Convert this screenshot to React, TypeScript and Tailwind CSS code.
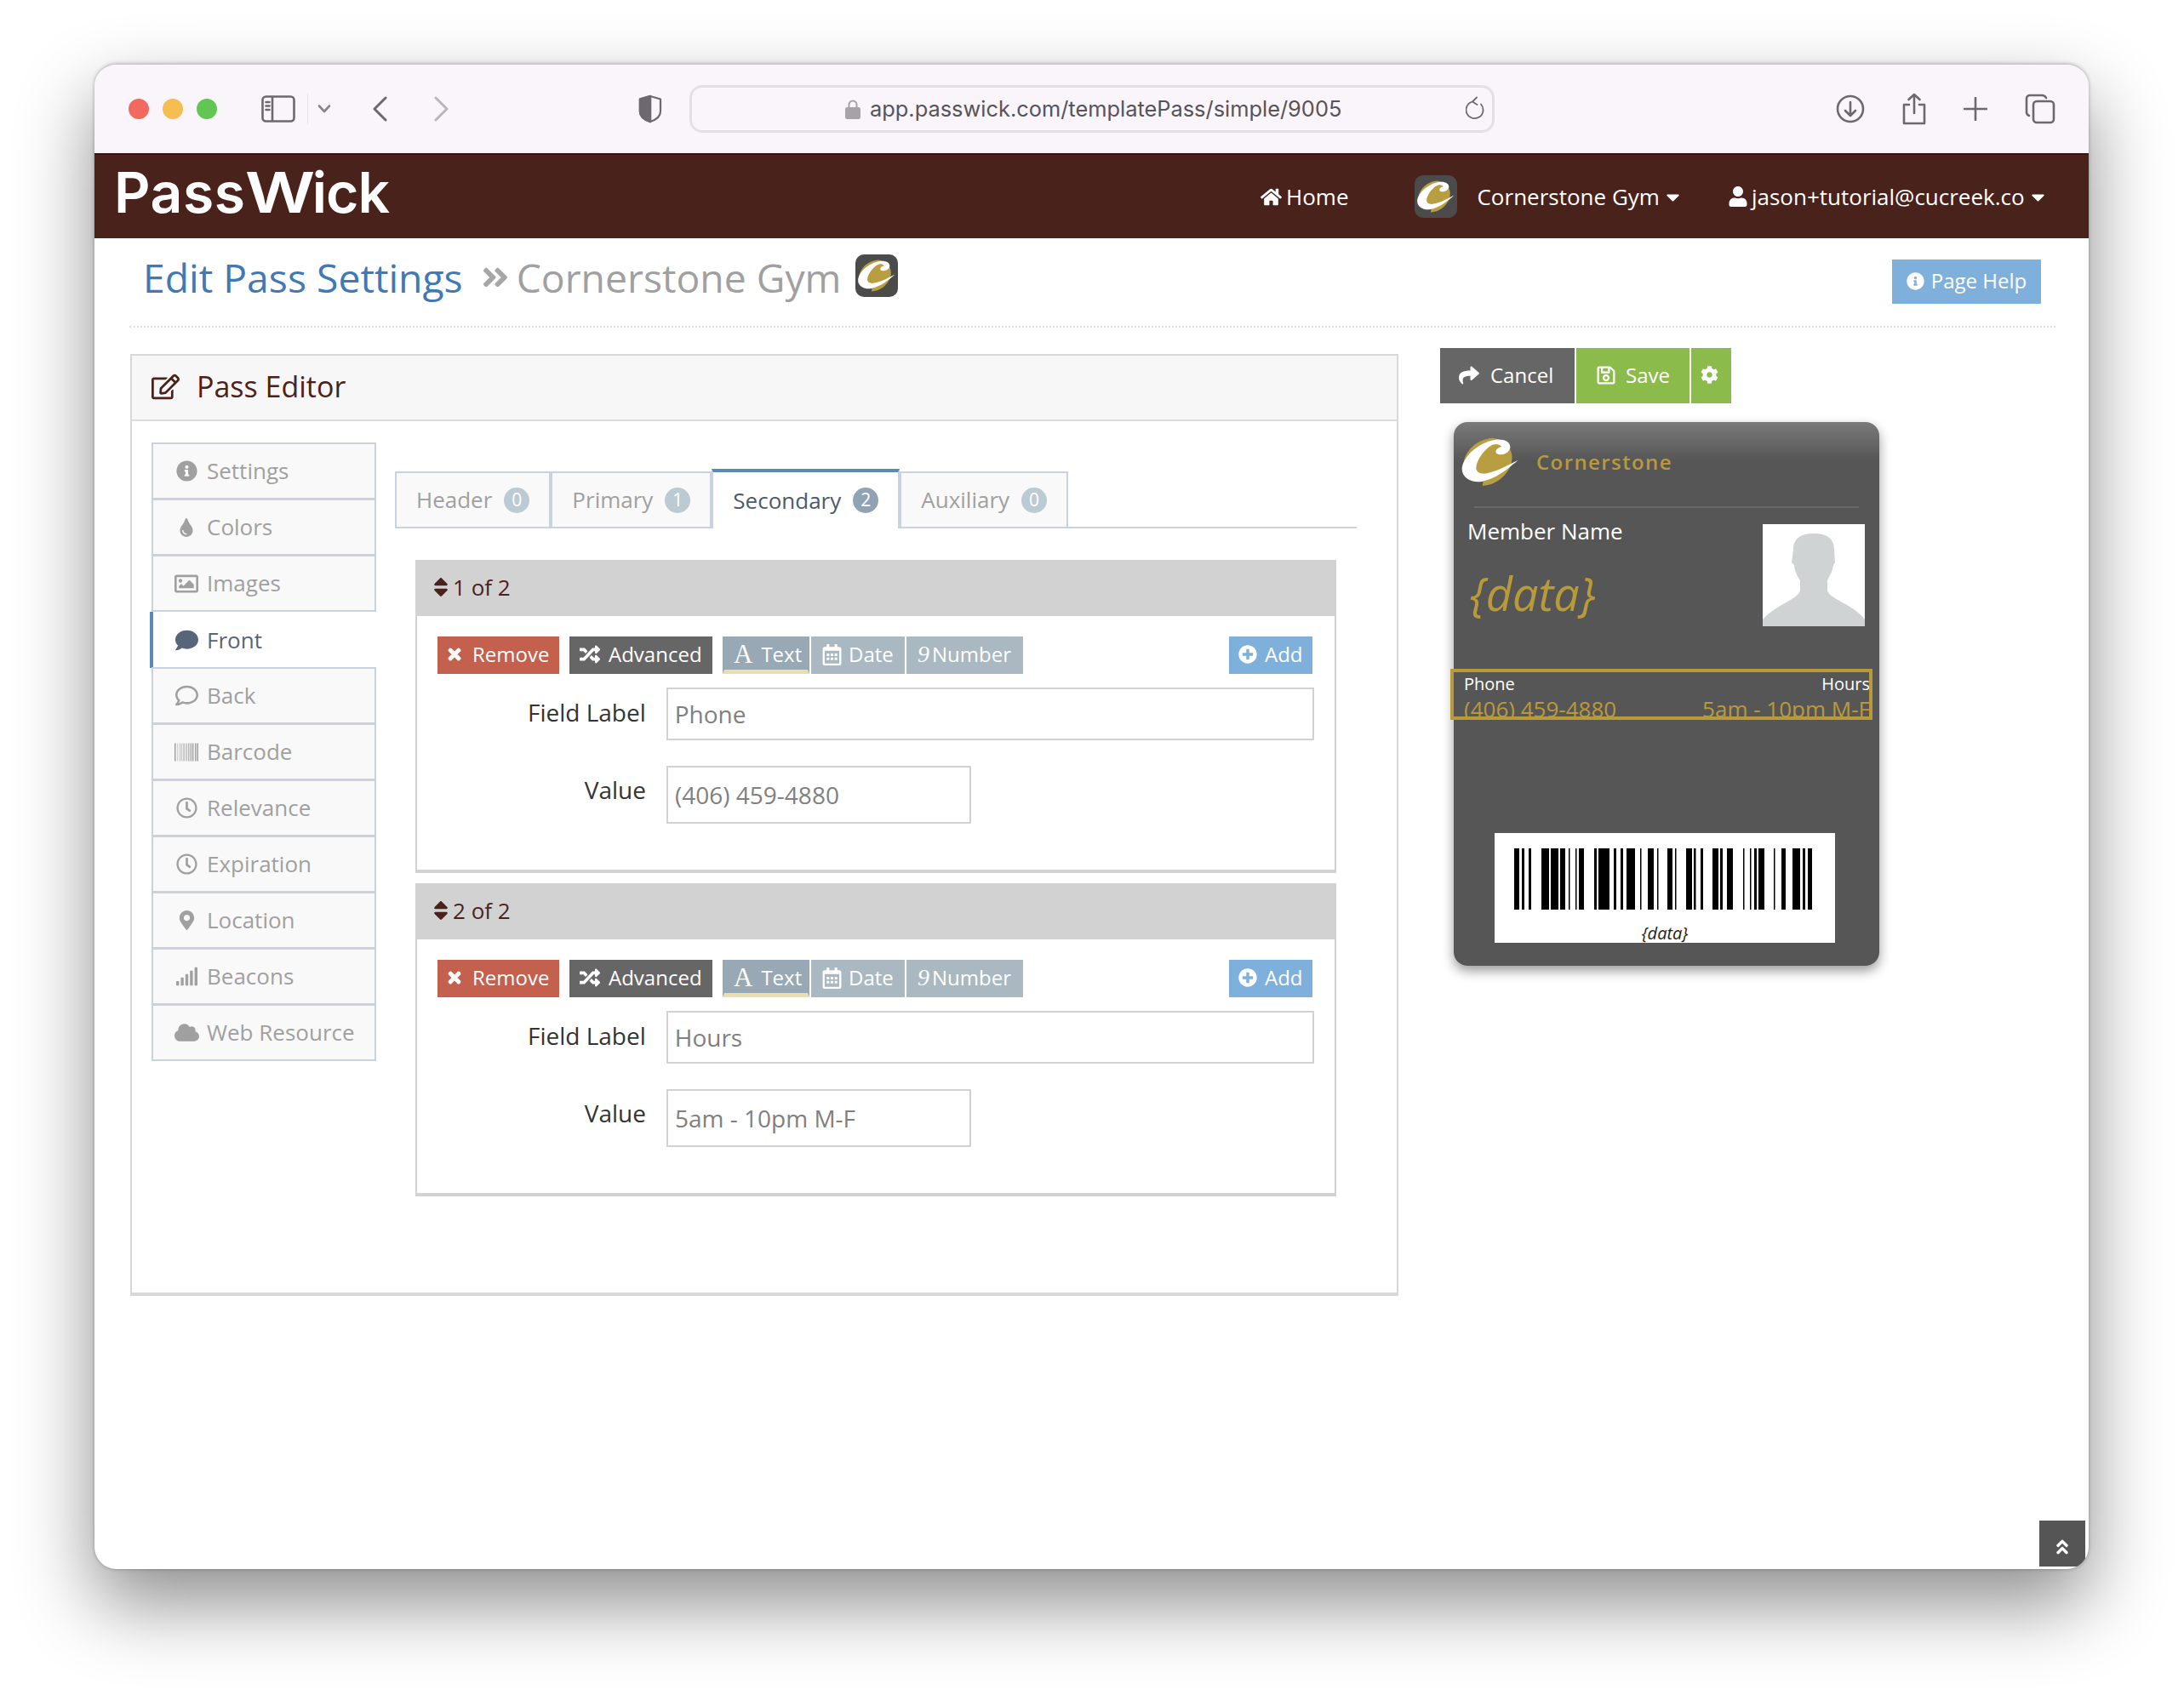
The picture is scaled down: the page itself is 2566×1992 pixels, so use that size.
import {
  FaHome, FaCaretDown, FaUser, FaRegEdit, FaInfoCircle, FaTint, FaRegImage, FaComment, FaRegComment,
  FaBarcode, FaRegClock, FaMapMarkerAlt, FaSignal, FaCloud, FaSort, FaTimes, FaRandom,
  FaRegCalendarAlt, FaPlusCircle, FaShare, FaRegSave, FaCog, FaAngleDoubleUp, FaAngleDoubleRight,
} from "react-icons/fa";

const sans = "font-['Open_Sans',sans-serif]";

// x, width of each bar, measured from the barcode's left edge
const bars: [number, number][] = [
  [19, 6], [28, 3], [36, 3], [51, 9], [62, 9], [73, 6], [83, 1.5], [91, 1.5], [95, 6], [113, 3], [118, 13],
  [136, 3], [144, 3], [151, 10], [167, 1.5], [176, 7], [187, 1.5], [199, 6], [208, 1.5], [221, 7], [230, 2.5],
  [238, 3], [252, 7], [261, 3], [269, 7], [288, 1.5], [296, 1.5], [301, 3], [306, 7], [324, 1.5], [333, 5],
  [346, 9], [358, 3], [364, 5],
];

const menu = [
  { label: "Settings", icon: <FaInfoCircle /> },
  { label: "Colors", icon: <FaTint className="text-[22px]" /> },
  { label: "Images", icon: <FaRegImage className="text-[28px]" /> },
  { label: "Front", icon: <FaComment className="text-[27px]" />, active: true },
  { label: "Back", icon: <FaRegComment className="text-[27px]" /> },
  { label: "Barcode", icon: <FaBarcode className="text-[28px]" /> },
  { label: "Relevance", icon: <FaRegClock /> },
  { label: "Expiration", icon: <FaRegClock /> },
  { label: "Location", icon: <FaMapMarkerAlt className="text-[23px]" /> },
  { label: "Beacons", icon: <FaSignal className="text-[27px]" /> },
  { label: "Web Resource", icon: <FaCloud className="text-[29px]" /> },
];

const tabs = [
  { label: "Header", count: 0 },
  { label: "Primary", count: 1 },
  { label: "Secondary", count: 2, active: true },
  { label: "Auxiliary", count: 0 },
];

const LogoMark = ({ className }: { className: string }) => (
  <svg viewBox="45 38 210 180" className={className}>
    <path
      d="M158 43C108 46 64 82 56 130 52 165 85 192 125 197L122 212C165 210 205 182 222 140 232 112 226 82 205 66 190 52 175 44 158 43Z"
      fill="#b99e41"
    />
    <path
      d="M248 121C215 150 175 185 120 197 85 202 50 185 50 152 52 112 105 60 165 50 195 45 222 55 220 78 216 98 188 108 172 98 165 90 172 78 190 74 180 62 165 62 150 72 125 88 100 125 100 150 102 170 125 172 150 165 185 155 220 135 248 121Z"
      fill="#fff"
    />
  </svg>
);

const LogoTile = ({ className }: { className: string }) => (
  <div className={`flex h-[50px] w-[50px] items-center justify-center rounded-[10px] bg-[#4b4b4b] ${className}`}>
    <LogoMark className="h-[40px] w-[46px]" />
  </div>
);

const ChromeIcon = ({ className, children }: { className: string; children: React.ReactNode }) => (
  <svg className={className} fill="none" stroke="#6d6870" strokeWidth="2.6" strokeLinecap="round" strokeLinejoin="round">
    {children}
  </svg>
);

const Btn = ({ className, children }: { className: string; children: React.ReactNode }) => (
  <div className={`flex h-[44px] items-center pb-[2px] text-[24px] text-white ${className}`}>{children}</div>
);

const FieldBox = ({ index, label, value }: { index: number; label: string; value: string }) => (
  <div className="w-[1082px] border-2 border-b-4 border-[#d2d2d2]">
    <div className="-m-[2px] mb-0 flex h-[66px] items-center bg-[#d2d2d2] pb-[2px] pl-[16px] text-[26px] text-[#4a221c]">
      <FaSort className="text-[28px]" />
      <span>{index} of 2</span>
    </div>
    <div className="px-[24px] pb-[54px] pt-[24px]">
      <div className="flex items-center">
        <Btn className="w-[143px] gap-[11px] bg-[#c4604e] pl-[10px]">
          <FaTimes className="text-[20px]" stroke="currentColor" strokeWidth={30} /> Remove
        </Btn>
        <Btn className="ml-[12px] w-[168px] gap-[10px] bg-[#666666] pl-[12px]">
          <FaRandom className="text-[24px]" /> Advanced
        </Btn>
        <Btn className="ml-[12px] w-[102px] gap-[10px] border-2 border-b-[5px] border-[#98a8b4] border-b-[#ecdfae] bg-[#98a8b4] pl-[11px] pt-[2px]">
          <span className="font-['Liberation_Serif',serif] text-[31px] leading-none">A</span> Text
        </Btn>
        <Btn className="ml-[2px] w-[110px] gap-[7px] bg-[#aab8c1] pl-[12px]">
          <FaRegCalendarAlt className="text-[25px]" /> Date
        </Btn>
        <Btn className="ml-[2px] w-[137px] gap-[3px] bg-[#aab8c1] pl-[13px]">
          <span className="font-['Liberation_Serif',serif] text-[28px] italic">9</span> Number
        </Btn>
        <Btn className="ml-auto mr-[2px] w-[98px] gap-[9px] bg-[#7fb0db] pl-[11px]">
          <FaPlusCircle className="text-[22px]" /> Add
        </Btn>
      </div>
      <div className="mt-[16px] flex items-center">
        <div className="w-[245px] pb-[4px] text-right text-[28px] text-[#333]">Field Label</div>
        <input
          readOnly
          value={label}
          className="ml-[24px] h-[62px] w-[762px] border-2 border-[#d2d2d2] px-[8px] text-[28px] text-[#808080] outline-none"
        />
      </div>
      <div className="mt-[30px] flex items-center">
        <div className="w-[245px] pb-[12px] text-right text-[28px] text-[#333]">Value</div>
        <input
          readOnly
          value={value}
          className="ml-[24px] h-[68px] w-[358px] border-2 border-[#d2d2d2] px-[8px] text-[28px] text-[#808080] outline-none"
        />
      </div>
    </div>
  </div>
);

const Card = () => (
  <div className="ml-[16px] mt-[22px] flex h-[639px] w-[500px] flex-col rounded-[16px] bg-[linear-gradient(#7a7a7a,#565656_46px)] shadow-[0_6px_14px_rgba(0,0,0,0.4)]">
    <div className="flex h-[99px] items-center pb-[5px] pl-[8px]">
      <LogoMark className="h-[62px] w-[70px]" />
      <span className="ml-[19px] text-[24px] font-semibold tracking-[1.4px] text-[#b99a3b]">Cornerstone</span>
    </div>
    <div className="mx-[24px] h-[2px] bg-[#686868]" />
    <div className="flex justify-between pr-[17px]">
      <div className="pl-[16px] pt-[8px]">
        <div className="text-[26px] leading-[38px] text-white">Member Name</div>
        <div className="mt-[18px] pl-[3px] text-[54px] italic leading-[72px] text-[#b99a3b]">{"{data}"}</div>
      </div>
      <div className="mt-[19px] h-[120px] w-[120px] bg-white">
        <svg viewBox="0 0 120 120" className="h-full w-full">
          <path
            d="M36 30C36 16 46 11 60 11 74 11 84 16 84 30L85 45 83 48C82 56 78 62 76 66L76 78C78 88 105 93 120 112L120 120 0 120 0 112C15 95 42 88 44 78L44 66C41 62 38 56 37 48L34 45Z"
            fill="#cfd3d4"
          />
        </svg>
      </div>
    </div>
    <div className="-ml-[4px] mt-[50px] h-[60px] w-[496px] overflow-hidden border-4 border-[#b99a3b] pl-[12px]">
      <div className="-mr-[1px] flex justify-between text-[20px] leading-[28px] text-white">
        <span>Phone</span>
        <span>Hours</span>
      </div>
      <div className="-mr-[1px] flex justify-between whitespace-nowrap text-[26px] leading-[30px] text-[#b99a3b]">
        <span>(406) 459-4880</span>
        <span>5am - 10pm M-F</span>
      </div>
    </div>
    <div className="ml-[48px] mt-[133px] h-[129px] w-[400px] overflow-hidden bg-white">
      <svg viewBox="0 0 400 90" className="h-[90px] w-[400px]">
        {bars.map(([x, w]) => (
          <rect key={x} x={x + 4} y={18} width={w} height={72} fill="#000" />
        ))}
      </svg>
      <div className="mt-[17px] text-center text-[20px] italic leading-[22px] text-[#222]">{"{data}"}</div>
    </div>
  </div>
);

export default function App() {
  return (
    <div className={`h-[1992px] w-[2566px] overflow-hidden bg-white pl-[111px] pt-[75px] ${sans}`}>
      <div className="relative h-[1769px] w-[2343px] overflow-hidden rounded-[26px] border-t border-[#c8c8c8] bg-white shadow-[0_40px_90px_rgba(0,0,0,0.45),0_0_4px_rgba(0,0,0,0.3)]">
        <div className="flex h-[104px] items-center bg-[#f9f5fb] pl-[40px]">
          <span className="h-[24px] w-[24px] rounded-full bg-[#f1695f]" />
          <span className="ml-[16px] h-[24px] w-[24px] rounded-full bg-[#f6bd50]" />
          <span className="ml-[16px] h-[24px] w-[24px] rounded-full bg-[#62c554]" />
          <ChromeIcon className="ml-[52px] h-[32px] w-[40px]">
            <rect x="1.5" y="1.5" width="37" height="29" rx="4" />
            <path d="M13 2V30M5.5 8H9.5M5.5 12.5H9.5M5.5 17H9.5" />
          </ChromeIcon>
          <div className="ml-[14px] h-[36px] w-[1px] bg-[#e6e2e8]" />
          <ChromeIcon className="ml-[11px] h-[12px] w-[16px]">
            <path d="M2 2.500 8 9 14 2.500" strokeOpacity="0.8" />
          </ChromeIcon>
          <ChromeIcon className="ml-[48px] h-[30px] w-[18px]">
            <path d="M16 2 3 15 16 28" strokeWidth="3" />
          </ChromeIcon>
          <ChromeIcon className="ml-[55px] h-[30px] w-[18px]">
            <path d="M2 2 15 15 2 28" strokeWidth="3" stroke="#bab6bc" />
          </ChromeIcon>
          <ChromeIcon className="ml-[222px] h-[34px] w-[28px]">
            <path d="M14 2 26 5.500V20C26 26 20 30 14 32 8 30 2 26 2 20V5.500Z" strokeWidth="2.2" />
            <path d="M14 2 2 5.500V20C2 26 8 30 14 32Z" fill="#6d6870" />
          </ChromeIcon>
          <div className="ml-[32px] flex h-[56px] w-[946px] items-center rounded-[15px] border-[3px] border-[#e3dfe6] pl-[180px] pr-[9px]">
            <svg viewBox="0 0 18 24" className="h-[24px] w-[18px]">
              <path d="M4.500 11V7a4.500 4.500 0 0 1 9 0v4" fill="none" stroke="#a5a2a8" strokeWidth="2" />
              <rect y="10" width="18" height="14" rx="2.5" fill="#a5a2a8" />
            </svg>
            <span className="ml-[11px] font-['Inter',sans-serif] text-[25.4px] text-[#57535a]">
              app.passwick.com/templatePass/simple/9005
            </span>
            <ChromeIcon className="ml-auto h-[30px] w-[22px]">
              <path d="M8 6.500A10 10 0 1 0 18 9.500M8 6.500 13 1.500M8 6.500 13.500 10" strokeWidth="1.8" />
            </ChromeIcon>
          </div>
          <ChromeIcon className="ml-[401px] h-[34px] w-[34px]">
            <circle cx="17" cy="17" r="15" />
            <path d="M17 9V25M11 19 17 25 23 19" />
          </ChromeIcon>
          <ChromeIcon className="ml-[42px] h-[38px] w-[32px]">
            <path d="M10 14H4V36H28V14H22M16 24V2M9.500 8 16 2 22.500 8" />
          </ChromeIcon>
          <ChromeIcon className="ml-[42px] h-[28px] w-[28px]">
            <path d="M14 1V27M1 14H27" />
          </ChromeIcon>
          <ChromeIcon className="ml-[44px] h-[36px] w-[36px]">
            <rect x="10" y="9" width="24" height="25" rx="4" />
            <path d="M5 26C3 25 2 24 2 22V6C2 3.500 3.500 2 6 2H20C22 2 24 3 25 5" />
          </ChromeIcon>
        </div>

        <div className="flex h-[100px] items-center border-t-2 border-[#3a1410] bg-[#4a221c] pl-[23px] text-[26px] text-white">
          <div className="h-[78px] w-[322px] whitespace-nowrap font-['Inter',sans-serif] text-[66px] font-semibold leading-[68px]">
            <span className="tracking-[0.5px]">Pass</span>
            <span className="mr-[11px] inline-block origin-left scale-x-[1.22]">W</span>
            <span className="tracking-[-1px]">ick</span>
          </div>
          <FaHome className="ml-[1025px] text-[25px]" />
          <span className="ml-[5px]">Home</span>
          <LogoTile className="ml-[78px]" />
          <span className="ml-[23px]">Cornerstone Gym</span>
          <FaCaretDown className="ml-[3px] text-[25px]" />
          <FaUser className="ml-[52px] text-[24px]" />
          <span className="ml-[4px]">jason+tutorial@cucreek.co</span>
          <FaCaretDown className="ml-[3px] text-[25px]" />
        </div>

        <div className="ml-[41px] mr-[39px] flex h-[105px] items-center border-b-2 border-dotted border-[#dddddd] pl-[16px] pr-[17px]">
          <span className="mb-[10px] text-[46.3px] text-[#4079b3]">Edit Pass Settings</span>
          <FaAngleDoubleRight className="mb-[12px] ml-[20px] text-[36px] text-[#a6a6a6]" />
          <span className="mb-[10px] ml-[7px] text-[46.3px] text-[#a0a0a0]">Cornerstone Gym</span>
          <LogoTile className="mb-[15px] ml-[17px]" />
          <div className="mb-[1px] ml-auto flex h-[52px] w-[175px] items-center justify-center gap-[8px] bg-[#7fb0db] pb-[2px] text-[24px] text-white">
            <FaInfoCircle className="text-[21px]" /> Page Help
          </div>
        </div>

        <div className="ml-[42px] flex items-start">
          <div className="mt-[31px] h-[1107px] w-[1490px] border-2 border-b-4 border-[#d8d8d8]">
            <div className="flex h-[77px] items-center gap-[20px] border-b-2 border-[#dddddd] bg-[#f7f7f7] pb-[2px] pl-[23px] text-[34px] text-[#4a221c]">
              <FaRegEdit className="text-[33px]" /> Pass Editor
            </div>
            <div className="flex pl-[23px] pt-[26px]">
              <div className="flex w-[264px] flex-col">
                {menu.map((m) =>
                  m.active ? (
                    <div key={m.label} className="-ml-[2px] flex h-[66px] w-[266px] items-center border-l-4 border-[#5a8ab8] bg-white pl-[21px] text-[#56657a]">
                      <span className="flex w-[36px] justify-center text-[25px]">{m.icon}</span>
                      <span className="ml-[6px] text-[26px]">{m.label}</span>
                    </div>
                  ) : (
                    <div key={m.label} className="-mt-[1px] flex h-[67px] items-center border-2 border-[#c9d3e0] bg-[#f9f9f9] pl-[21px] text-[#a0a0a0]">
                      <span className="flex w-[36px] justify-center text-[25px]">{m.icon}</span>
                      <span className="ml-[6px] text-[26px]">{m.label}</span>
                    </div>
                  ),
                )}
              </div>
              <div className="ml-[22px] mt-[33px] flex flex-col">
                <div className="flex h-[67px] w-[1130px] border-b-2 border-[#c9d3e0]">
                  {tabs.map((t) => (
                    <div
                      key={t.label}
                      className={
                        t.active
                          ? "-mb-[2px] -mt-[3px] flex items-center gap-[14px] border-x-2 border-t-4 border-x-[#c9d3e0] border-t-[#5a8ab8] bg-white px-[23px] text-[26px] text-[#4c5a6b]"
                          : "flex items-center gap-[14px] border-2 border-b-0 border-[#c9d3e0] bg-[#f9f9f9] px-[23px] text-[26px] text-[#a0a0a0]"
                      }
                    >
                      {t.label}
                      <span
                        className={
                          t.active
                            ? "flex h-[30px] w-[30px] items-center justify-center rounded-full bg-[#8fa3b5] text-[21px] text-white"
                            : "flex h-[30px] w-[30px] items-center justify-center rounded-full bg-[#bccad3] text-[21px] text-white"
                        }
                      >
                        {t.count}
                      </span>
                    </div>
                  ))}
                </div>
                <div className="ml-[24px] mt-[37px] flex flex-col gap-[12px]">
                  <FieldBox index={1} label="Phone" value="(406) 459-4880" />
                  <FieldBox index={2} label="Hours" value="5am - 10pm M-F" />
                </div>
              </div>
            </div>
          </div>

          <div className="ml-[49px] mt-[24px]">
            <div className="flex h-[65px] text-[24px] text-white">
              <div className="flex w-[158px] items-center gap-[13px] bg-[#666666] pb-[2px] pl-[22px]">
                <FaShare className="text-[24px]" /> Cancel
              </div>
              <div className="ml-[2px] flex w-[133px] items-center gap-[11px] bg-[#8bbb4a] pb-[2px] pl-[23px]">
                <FaRegSave className="text-[24px]" /> Save
              </div>
              <div className="ml-[2px] flex w-[47px] items-center justify-center bg-[#8bbb4a] pb-[2px] pr-[4px]">
                <FaCog className="text-[21px]" />
              </div>
            </div>
            <Card />
          </div>
        </div>

        <div className="absolute bottom-[3px] right-[4px] flex h-[54px] w-[54px] items-end justify-center bg-[#555555] pb-[12px] text-[22px] text-white">
          <FaAngleDoubleUp />
        </div>
      </div>
    </div>
  );
}
